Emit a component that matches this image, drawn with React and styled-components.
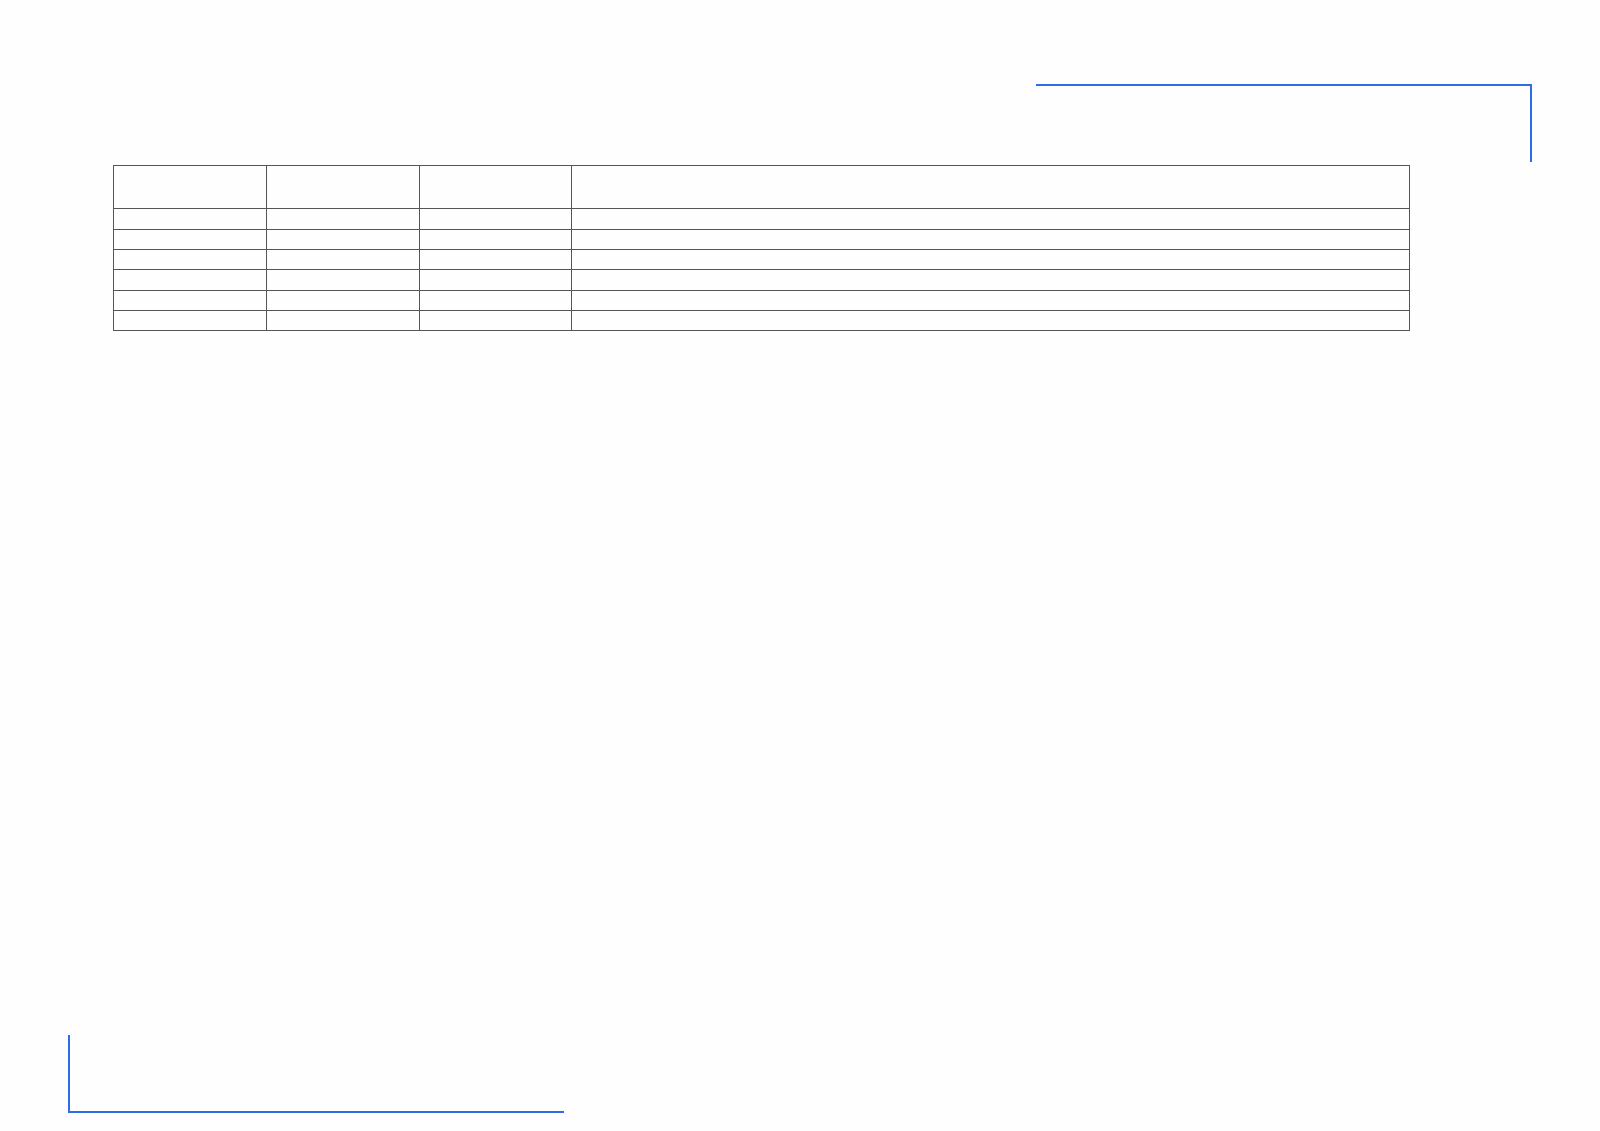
import React from 'react'
import styled, { createGlobalStyle } from 'styled-components'

const GlobalStyle = createGlobalStyle`
    html, body {
        margin: 0;
        padding: 0;
        background: #fefefe;
        font-family: "Liberation Sans", Arial, sans-serif;
    }
`

const columns = [153, 153, 152, 'auto']
const rows = [21, 20, 20, 21, 20, 20]

const Page = () => {
    return (
        <Wrapper>
            <GlobalStyle />
            <CornerMark $side='top' />
            <Grid>
                <colgroup>
                    {columns.map((w, i) => (
                        <col key={i} style={{ width: w === 'auto' ? 'auto' : `${w}px` }} />
                    ))}
                </colgroup>
                <thead>
                    <tr className='head'>
                        {columns.map((_, i) => (
                            <th key={i}></th>
                        ))}
                    </tr>
                </thead>
                <tbody>
                    {rows.map((h, r) => (
                        <Row key={r} $height={h}>
                            {columns.map((_, c) => (
                                <td key={c}></td>
                            ))}
                        </Row>
                    ))}
                </tbody>
            </Grid>
            <Spacer />
            <CornerMark $side='bottom' />
        </Wrapper>
    )
}

const Wrapper = styled.div`
    box-sizing: border-box;
    height: 1131px;
    width: 1600px;
    padding-top: 84px;
    padding-bottom: 18px;
    display: flex;
    flex-direction: column;
`

const CornerMark = styled.div`
    box-sizing: border-box;
    width: 496px;
    flex: none;
    ${({ $side }) =>
        $side === 'top'
            ? `
        align-self: flex-end;
        margin-right: 68px;
        height: 78px;
        border-top: 2px solid #2f6de6;
        border-right: 2px solid #2f6de6;
    `
            : `
        align-self: flex-start;
        margin-left: 68px;
        height: 78px;
        border-left: 2px solid #2f6de6;
        border-bottom: 2px solid #2f6de6;
    `}
`

const Grid = styled.table`
    margin: 3px 0 0 113px;
    width: 1297px;
    border-collapse: collapse;
    table-layout: fixed;
    border: 1px solid #5a5a5a;
    th, td {
        border: 1px solid #555;
        padding: 0;
    }
    .head {
        height: 43px;
    }
`

const Row = styled.tr`
    height: ${({ $height }) => $height}px;
`

const Spacer = styled.div`
    flex: 1;
`

export default Page
